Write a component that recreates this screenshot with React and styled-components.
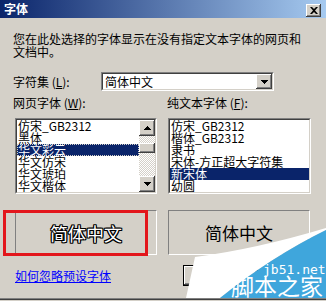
import React from 'react';
import styled, { createGlobalStyle } from 'styled-components';

const GlobalStyle = createGlobalStyle`
	html, body {
		margin: 0;
		padding: 0;
		background: #d4d0c8;
	}
	body {
		font-family: "Noto Sans CJK SC", "Noto Sans", sans-serif;
		font-size: 12px;
		color: #000;
	}
`;

const Window = styled.div`
	position: relative;
	width: 326px;
	height: 301px;
	box-sizing: border-box;
	background: #d4d0c8;
	overflow: hidden;
	display: flex;
	flex-direction: column;
	box-shadow: inset 0 -1px #d4d0c8, inset 0 -2px #404040, inset 0 -3px #808080;
`;

const TitleBar = styled.div`
	height: 18px;
	display: flex;
	align-items: center;
	justify-content: space-between;
	padding: 0 5px 0 4px;
	background: linear-gradient(to right, #0a246a, #a6caf0);
`;

const Title = styled.span`
	color: #fff;
	font-weight: bold;
	line-height: 12px;
`;

const raised = `
	background: #d4d0c8;
	box-shadow: inset -1px -1px #404040, inset 1px 1px #fff,
		inset -2px -2px #808080, inset 2px 2px #d4d0c8;
`;

const CloseButton = styled.div`
	${raised}
	width: 15px;
	height: 13px;
	margin-top: 3px;
	display: flex;
	align-items: center;
	justify-content: center;
`;

const Body = styled.div`
	padding: 14px 15px 0 13px;
	display: flex;
	flex-direction: column;
`;

const Description = styled.p`
	margin: 0;
	line-height: 13px;
`;

const CharsetRow = styled.div`
	display: flex;
	align-items: center;
	margin-top: 14px;
	height: 19px;
`;

const Label = styled.span`
	line-height: 12px;
	white-space: nowrap;
	width: ${(p) => p.width || 'auto'};
	u {
		text-decoration: underline;
	}
`;

const Sunken = styled.div`
	box-sizing: border-box;
	border: 1px solid;
	border-color: #808080 #fff #fff #808080;
	background: #fff;
`;

const SunkenInner = styled.div`
	box-sizing: border-box;
	height: 100%;
	border: 1px solid;
	border-color: #404040 #d4d0c8 #d4d0c8 #404040;
	display: flex;
	overflow: hidden;
`;

const Select = styled(Sunken)`
	width: 173px;
	height: 19px;
`;

const SelectValue = styled.div`
	flex: 1;
	padding-left: 2px;
	line-height: 15px;
`;

const ArrowButton = styled.div`
	${raised}
	width: 16px;
	height: ${(p) => p.h || 16}px;
	flex: none;
	display: flex;
	align-items: center;
	justify-content: center;
`;

const Columns = styled.div`
	display: grid;
	grid-template-columns: 144px 144px;
	column-gap: 10px;
	margin-top: ${(p) => p.top}px;
`;

const Column = styled.div`
	display: flex;
	flex-direction: column;
`;

const List = styled(Sunken)`
	margin-top: 9px;
	margin-left: ${(p) => p.indent}px;
	width: ${(p) => p.width}px;
	height: 76px;
`;

const Items = styled.div`
	flex: 1;
	display: flex;
	flex-direction: column;
	overflow: hidden;
`;

const Item = styled.div`
	height: 12px;
	line-height: 12px;
	padding-left: 1px;
	white-space: nowrap;
	background: ${(p) => (p.selected ? '#0a246a' : 'transparent')};
	color: ${(p) => (p.selected ? '#fff' : '#000')};
	outline: ${(p) => (p.focused ? '1px dotted #d4d0c8' : 'none')};
	outline-offset: -1px;
`;

const ScrollBar = styled.div`
	width: 16px;
	display: flex;
	flex-direction: column;
	background: repeating-conic-gradient(#fff 0 25%, #d4d0c8 0 50%) 0 0 / 2px 2px;
`;

const Track = styled.div`
	flex: 1;
	padding-top: 7px;
`;

const Thumb = styled.div`
	${raised}
	height: 10px;
`;

const PreviewButton = styled.div`
	box-sizing: border-box;
	margin-left: ${(p) => p.indent}px;
	width: 142px;
	height: 45px;
	border: 1px solid;
	border-color: #808080 #fff #fff #808080;
	display: flex;
	align-items: center;
	justify-content: center;
	font-size: ${(p) => (p.outlined ? 18 : 17)}px;
	color: ${(p) => (p.outlined ? '#fff' : '#000')};
	text-shadow: ${(p) =>
		p.outlined
			? '1px 0 #000, -1px 0 #000, 0 1px #000, 0 -1px #000, 1px 1px #000, -1px -1px #000, 1px -1px #000, -1px 1px #000'
			: 'none'};
`;

const Highlight = styled.div`
	position: absolute;
	left: 3px;
	top: 210px;
	width: 145px;
	height: 46px;
	box-sizing: border-box;
	border: 3px solid #e3161c;
`;

const BottomRow = styled.div`
	display: grid;
	grid-template-columns: 154px 1fr;
	align-items: center;
	margin-top: 10px;
	height: 21px;
`;

const Link = styled.a`
	margin-left: 2px;
	color: #0000ff;
	text-decoration: underline;
	line-height: 12px;
	white-space: nowrap;
`;

const OkButton = styled.div`
	${raised}
	margin-left: 16px;
	width: 75px;
	height: 21px;
	box-sizing: border-box;
	border: 1px solid #000;
`;

const Watermark = styled.svg`
	position: absolute;
	right: 0;
	bottom: 3px;
`;

const UpArrow = () => (
	<svg width='7' height='4' viewBox='0 0 7 4'>
		<path d='M3 0h1v1h1v1h1v1h1v1H0V3h1V2h1V1h1z' fill='#000' />
	</svg>
);

const DownArrow = () => (
	<svg width='7' height='4' viewBox='0 0 7 4'>
		<path d='M0 0h7v1H6v1H5v1H4v1H3V3H2V2H1V1H0z' fill='#000' />
	</svg>
);

const webFonts = ['仿宋_GB2312', '黑体', '华文彩云', '华文仿宋', '华文琥珀', '华文楷体'];
const textFonts = ['仿宋_GB2312', '楷体_GB2312', '隶书', '宋体-方正超大字符集', '新宋体', '幼圆'];

export default function App() {
	return (
		<Window>
			<GlobalStyle />
			<TitleBar>
				<Title>字体</Title>
				<CloseButton>
					<svg width='8' height='7' viewBox='0 0 8 7'>
						<path d='M0 0h2l2 2 2-2h2L5 3.5 8 7H6L4 5 2 7H0l3-3.5z' fill='#000' />
					</svg>
				</CloseButton>
			</TitleBar>
			<Body>
				<Description>
					您在此处选择的字体显示在没有指定文本字体的网页和
					<br />
					文档中。
				</Description>
				<CharsetRow>
					<Label width='88px'>
						字符集 (<u>L</u>):
					</Label>
					<Select>
						<SunkenInner>
							<SelectValue>简体中文</SelectValue>
							<ArrowButton h={15}>
								<DownArrow />
							</ArrowButton>
						</SunkenInner>
					</Select>
				</CharsetRow>
				<Columns top={6}>
					<Column>
						<Label>
							网页字体 (<u>W</u>):
						</Label>
						<List indent={2} width={142}>
							<SunkenInner>
								<Items>
									{webFonts.map((f, i) => (
										<Item key={f} selected={i === 2} focused={i === 2}>
											{f}
										</Item>
									))}
								</Items>
								<ScrollBar>
									<ArrowButton>
										<UpArrow />
									</ArrowButton>
									<Track>
										<Thumb />
									</Track>
									<ArrowButton>
										<DownArrow />
									</ArrowButton>
								</ScrollBar>
							</SunkenInner>
						</List>
					</Column>
					<Column>
						<Label>
							纯文本字体 (<u>F</u>):
						</Label>
						<List indent={1} width={143}>
							<SunkenInner>
								<Items>
									{textFonts.map((f, i) => (
										<Item key={f} selected={i === 4}>
											{f}
										</Item>
									))}
								</Items>
							</SunkenInner>
						</List>
					</Column>
				</Columns>
				<Columns top={16}>
					<PreviewButton indent={2} outlined>
						简体中文
					</PreviewButton>
					<PreviewButton indent={1}>简体中文</PreviewButton>
				</Columns>
				<BottomRow>
					<Link>如何忽略预设字体</Link>
					<OkButton />
				</BottomRow>
			</Body>
			<Highlight />
			<Watermark width='150' height='73' viewBox='0 0 150 73'>
				<path d='M10 73L19 32Q80 24 150 3V5Q95 32 44 73Z' fill='#fff' />
				<path d='M150 5Q95 32 44 73H150Z' fill='#3fa6dc' />
				<text
					x='87'
					y='49'
					fill='#fff'
					fontSize='13'
					fontFamily='"DejaVu Sans Mono", monospace'
				>
					jb51.net
				</text>
				<text
					x='55'
					y='70'
					fill='#fff'
					fontSize='23'
					fontFamily='"Noto Sans CJK SC", sans-serif'
				>
					脚本之家
				</text>
			</Watermark>
		</Window>
	);
}
